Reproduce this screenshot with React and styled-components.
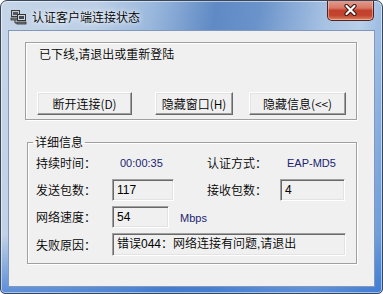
import styled, { createGlobalStyle } from "styled-components";

const GlobalStyle = createGlobalStyle`
  html, body { margin: 0; padding: 0; background: #ffffff; }
  body {
    font-family: "Liberation Sans", "Noto Sans CJK SC", sans-serif;
    font-size: 12px;
    color: #000;
  }
`;

const ComputersIcon = () => (
  <svg width="17" height="16" viewBox="0 0 17 16">
    {/* back computer */}
    <rect x="1.5" y="1.5" width="8" height="6" fill="#c9c9c9" stroke="#3c3c3c" />
    <rect x="3" y="3" width="5" height="3" fill="#4c5a6a" />
    <rect x="1" y="9" width="7" height="2" fill="#8a8a8a" stroke="#333" strokeWidth="0.8" />
    {/* front computer */}
    <rect x="7.5" y="5.5" width="8" height="6" fill="#d6d6d6" stroke="#333" />
    <rect x="9" y="7" width="5" height="3" fill="#3d4b5c" />
    <rect x="7" y="13" width="9" height="2" fill="#7c7c7c" stroke="#2c2c2c" strokeWidth="0.8" />
    <line x1="5" y1="11" x2="5" y2="14" stroke="#333" />
    <line x1="5" y1="14" x2="7" y2="14" stroke="#333" />
  </svg>
);

const CloseGlyph = () => (
  <svg width="15" height="12" viewBox="0 0 15 12">
    <path d="M3.5 2 L11.5 10 M11.5 2 L3.5 10" stroke="#3b1410" strokeWidth="4.2" strokeLinecap="round" />
    <path d="M3.5 2 L11.5 10 M11.5 2 L3.5 10" stroke="#ffffff" strokeWidth="2.2" strokeLinecap="round" />
  </svg>
);

const App = () => {
  return (
    <>
      <GlobalStyle />
      <Window>
        <TitleBar>
          <TitleIcon>
            <ComputersIcon />
          </TitleIcon>
          <TitleText>认证客户端连接状态</TitleText>
          <CloseBtn>
            <CloseGlyph />
          </CloseBtn>
        </TitleBar>

        <Client>
          <StatusBox>
            <StatusText>已下线,请退出或重新登陆</StatusText>
            <ButtonRow>
              <Button $w={95} $gap={23}>断开连接(D)</Button>
              <Button $w={78} $gap={16}>隐藏窗口(H)</Button>
              <Button $w={97}>隐藏信息(&lt;&lt;)</Button>
            </ButtonRow>
          </StatusBox>

          <Details>
            <Legend>详细信息</Legend>
            <Grid>
              <Label>持续时间：</Label>
              <StaticValue $indent={8}>00:00:35</StaticValue>
              <Label>认证方式：</Label>
              <StaticValue $indent={7}>EAP-MD5</StaticValue>

              <Label>发送包数：</Label>
              <Field $w={62}>117</Field>
              <Label>接收包数：</Label>
              <Field $w={65}>4</Field>

              <Label>网络速度：</Label>
              <FieldWithUnit>
                <Field $w={62}>54</Field>
                <Unit>Mbps</Unit>
              </FieldWithUnit>
              <Blank />
              <Blank />

              <Label>失败原因：</Label>
              <Field $w={234} $span>错误044：网络连接有问题,请退出</Field>
            </Grid>
          </Details>
        </Client>
      </Window>
    </>
  );
};

export default App;

const cjk = `"Noto Sans CJK SC", sans-serif`;

const Window = styled.div`
  width: 383px;
  height: 294px;
  box-sizing: border-box;
  border: 1px solid #3a4758;
  border-radius: 7px 7px 5px 5px;
  overflow: hidden;
  display: flex;
  flex-direction: column;
  padding: 0 7px 6px 7px;
  background:
    linear-gradient(to bottom, rgba(0, 0, 0, 0) 80%, rgba(56, 118, 210, 0.75) 100%),
    linear-gradient(100deg, #c6d5e8 0%, #bccfe6 22%, #98b6dc 36%, #5f8ac4 50%, #6a93ca 60%, #a8c2e3 76%, #b9cfe9 84%, #7ea7dc 94%, #5d92d8 100%);
  box-shadow: inset 0 0 0 1px rgba(255, 255, 255, 0.5);
`;

const TitleBar = styled.div`
  height: 29px;
  flex: none;
  display: flex;
  align-items: center;
`;

const TitleIcon = styled.div`
  width: 17px;
  height: 16px;
  margin-left: 2px;
  margin-top: 2px;
  display: flex;
`;

const TitleText = styled.div`
  margin-left: 5px;
  margin-top: 2px;
  font-family: ${cjk};
  font-weight: 350;
  font-size: 12px;
  line-height: 16px;
  color: #000;
  text-shadow: 0 0 4px rgba(255, 255, 255, 0.95), 0 0 8px rgba(255, 255, 255, 0.8);
`;

const CloseBtn = styled.div`
  align-self: flex-start;
  margin: -1px 1px 0 auto;
  width: 47px;
  height: 21px;
  box-sizing: border-box;
  border: 1px solid #4f241f;
  border-top: none;
  border-radius: 0 0 5px 5px;
  background: linear-gradient(#e4a193 0%, #d77865 40%, #c2402c 52%, #c24631 78%, #e0835d 100%);
  box-shadow: inset 0 0 0 1px rgba(255, 225, 215, 0.45);
  display: flex;
  align-items: center;
  justify-content: center;
`;

const Client = styled.div`
  flex: 1;
  background: #f0f0f0;
  border: 1px solid #7f98bb;
  display: flex;
  flex-direction: column;
`;

const StatusBox = styled.div`
  margin: 11px 17px 0 16px;
  height: 78px;
  box-sizing: border-box;
  border: 1px solid #a0a0a0;
  box-shadow: 1px 1px 0 #ffffff, inset 1px 1px 0 #ffffff;
  padding: 3px 10px 4px 11px;
  display: flex;
  flex-direction: column;
`;

const StatusText = styled.div`
  padding-left: 2px;
  line-height: 16px;
  font-family: ${cjk};
  font-weight: 350;
`;

const ButtonRow = styled.div`
  margin-top: 30px;
  display: flex;
`;

const Button = styled.div`
  width: ${(p) => p.$w}px;
  margin-right: ${(p) => p.$gap || 0}px;
  height: 23px;
  box-sizing: border-box;
  background: #f0f0f0;
  border: 1px solid;
  border-color: #ffffff #696969 #696969 #ffffff;
  box-shadow: inset -1px -1px 0 #a0a0a0, inset 1px 1px 0 #e3e3e3;
  display: flex;
  align-items: center;
  justify-content: center;
  font-family: ${cjk};
  font-weight: 350;
  font-size: 12px;
  line-height: 16px;
`;

const Details = styled.fieldset`
  margin: 14px 17px 0 18px;
  padding: 2px 10px 7px 8px;
  min-width: 0;
  border: 1px solid #a0a0a0;
  box-shadow: 1px 1px 0 #ffffff, inset 1px 1px 0 #ffffff;
`;

const Legend = styled.legend`
  margin-left: -3px;
  padding: 0 2px;
  line-height: 16px;
  font-family: ${cjk};
  font-weight: 350;
`;

const Grid = styled.div`
  display: grid;
  grid-template-columns: 76px 95px 73px 65px;
  grid-template-rows: 22px 22px 22px 23px;
  row-gap: 5px;
  align-items: center;
`;

const Label = styled.div`
  font-family: ${cjk};
  font-weight: 350;
  line-height: 16px;
  white-space: nowrap;
`;

const StaticValue = styled.div`
  padding-left: ${(p) => p.$indent}px;
  font-family: "Liberation Sans", sans-serif;
  font-size: 11px;
  color: #1b2470;
`;

const Field = styled.div`
  width: ${(p) => p.$w}px;
  height: ${(p) => (p.$span ? 23 : 22)}px;
  ${(p) => (p.$span ? "grid-column: 2 / -1;" : "")}
  box-sizing: border-box;
  background: #f0f0f0;
  border: 1px solid;
  border-color: #a0a0a0 #ffffff #ffffff #a0a0a0;
  box-shadow: inset 1px 1px 0 #696969, inset -1px -1px 0 #e3e3e3;
  padding: 2px 0 0 4px;
  font-family: "Liberation Sans", "Noto Sans CJK SC", sans-serif;
  font-weight: 350;
  font-size: 12px;
  line-height: 16px;
  white-space: nowrap;
  overflow: hidden;
`;

const FieldWithUnit = styled.div`
  display: flex;
  align-items: center;
`;

const Unit = styled.div`
  margin-left: 11px;
  margin-top: 2px;
  font-family: "Liberation Sans", sans-serif;
  font-size: 11px;
  color: #1b2470;
`;

const Blank = styled.div``;
